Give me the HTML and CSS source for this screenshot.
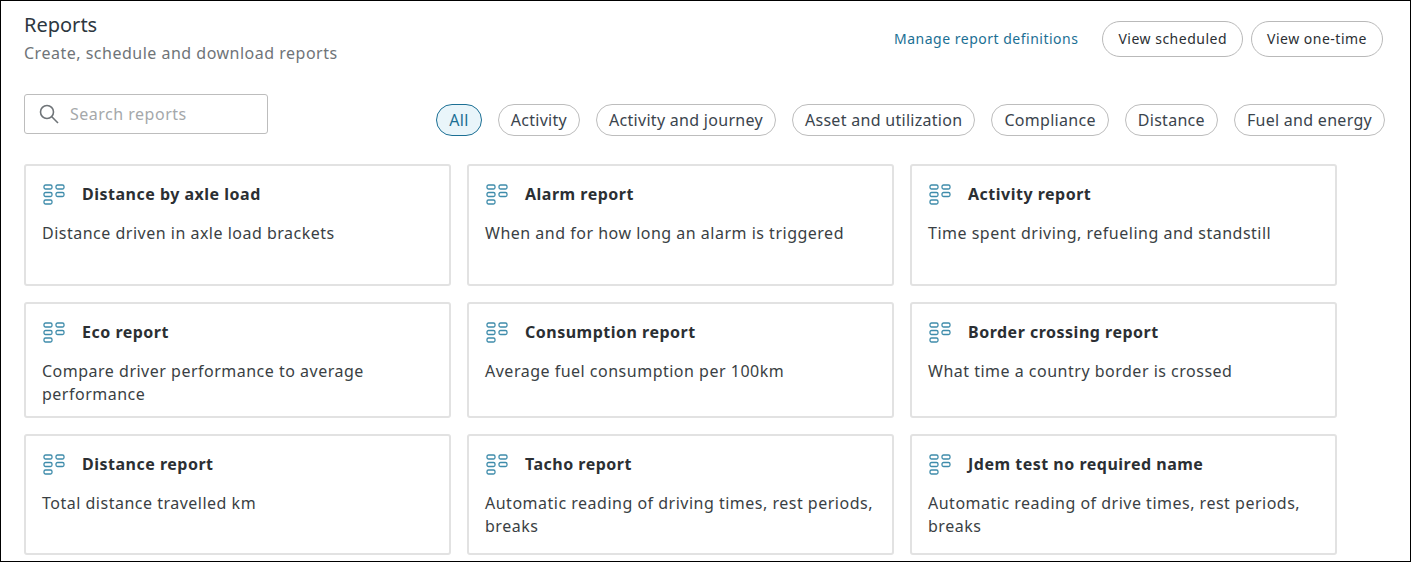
FILE: index.html
```html
<!DOCTYPE html>
<html lang="en">
<head>
    <meta charset="UTF-8">
    <title>Reports</title>
    <link rel="stylesheet" href="styles.css">
</head>
<body>
    <svg class="sprite" width="0" height="0">
        <symbol id="report-icon" viewBox="0 0 22 21">
            <rect x="1" y="1" width="8" height="4" rx="1.5"/>
            <rect x="1" y="8.5" width="8" height="4" rx="1.5"/>
            <rect x="1" y="16" width="8" height="4" rx="1.5"/>
            <rect x="13" y="1" width="8" height="4" rx="1.5"/>
            <rect x="13" y="8.5" width="8" height="4" rx="1.5"/>
        </symbol>
    </svg>
    <div class="page">
        <div class="header">
            <div>
                <h1>Reports</h1>
                <p class="subtitle">Create, schedule and download reports</p>
            </div>
            <div class="actions">
                <a class="manage" href="#">Manage report definitions</a>
                <button class="btn">View scheduled</button>
                <button class="btn">View one-time</button>
            </div>
        </div>
        <div class="filters">
            <div class="search">
                <svg class="search-icon" viewBox="0 0 20 20" width="20" height="20">
                    <circle cx="8" cy="8" r="6.5"/>
                    <path d="M12.8 12.8 L19 19"/>
                </svg>
                <span>Search reports</span>
            </div>
            <div class="chips">
                <span class="chip active">All</span>
                <span class="chip">Activity</span>
                <span class="chip">Activity and journey</span>
                <span class="chip">Asset and utilization</span>
                <span class="chip">Compliance</span>
                <span class="chip">Distance</span>
                <span class="chip">Fuel and energy</span>
            </div>
        </div>
        <div class="cards">
            <div class="card">
                <div class="card-title"><svg class="icon"><use href="#report-icon"/></svg>Distance by axle load</div>
                <p>Distance driven in axle load brackets</p>
            </div>
            <div class="card">
                <div class="card-title"><svg class="icon"><use href="#report-icon"/></svg>Alarm report</div>
                <p>When and for how long an alarm is triggered</p>
            </div>
            <div class="card">
                <div class="card-title"><svg class="icon"><use href="#report-icon"/></svg>Activity report</div>
                <p>Time spent driving, refueling and standstill</p>
            </div>
            <div class="card">
                <div class="card-title"><svg class="icon"><use href="#report-icon"/></svg>Eco report</div>
                <p>Compare driver performance to average performance</p>
            </div>
            <div class="card">
                <div class="card-title"><svg class="icon"><use href="#report-icon"/></svg>Consumption report</div>
                <p>Average fuel consumption per 100km</p>
            </div>
            <div class="card">
                <div class="card-title"><svg class="icon"><use href="#report-icon"/></svg>Border crossing report</div>
                <p>What time a country border is crossed</p>
            </div>
            <div class="card">
                <div class="card-title"><svg class="icon"><use href="#report-icon"/></svg>Distance report</div>
                <p>Total distance travelled km</p>
            </div>
            <div class="card">
                <div class="card-title"><svg class="icon"><use href="#report-icon"/></svg>Tacho report</div>
                <p>Automatic reading of driving times, rest periods, breaks</p>
            </div>
            <div class="card">
                <div class="card-title"><svg class="icon"><use href="#report-icon"/></svg>Jdem test no required name</div>
                <p>Automatic reading of drive times, rest periods, breaks</p>
            </div>
        </div>
    </div>
</body>
</html>
```
FILE: styles.css
```css
html, body {
    margin: 0;
    height: 100%;
    overflow: hidden;
}
body {
    background: #fff;
    color: #2b2f33;
    font-family: "Noto Sans", sans-serif;
    font-size: 16px;
    letter-spacing: 0.5px;
}
.sprite {
    display: block;
    height: 0;
}
.page {
    box-sizing: border-box;
    height: 562px;
    border: 1px solid #000;
    padding: 10px 25px 0 23px;
    overflow: hidden;
}
.header {
    display: flex;
    justify-content: space-between;
    align-items: flex-start;
}
h1 {
    margin: 0;
    font-size: 20px;
    line-height: 28px;
    font-weight: 400;
    color: #2d3740;
    letter-spacing: 0;
}
.subtitle {
    margin: 3px 0 0;
    font-size: 16px;
    line-height: 22px;
    color: #6f7478;
}
.actions {
    display: flex;
    align-items: center;
    gap: 8px;
    margin-top: 10px;
    margin-right: 2px;
}
.manage {
    color: #1b6f94;
    text-decoration: none;
    font-size: 14px;
    margin: 0 16px 2px 0;
}
.btn {
    height: 36px;
    padding: 0 15px 2px;
    border: 1px solid #b9b9b9;
    border-radius: 18px;
    background: #fff;
    color: #2b2f33;
    font-family: inherit;
    font-size: 14px;
    letter-spacing: 0.5px;
}
.filters {
    display: flex;
    justify-content: space-between;
    align-items: flex-start;
    margin-top: 30px;
}
.search {
    box-sizing: border-box;
    display: flex;
    align-items: center;
    gap: 11px;
    width: 244px;
    height: 40px;
    padding-left: 14px;
    border: 1px solid #bdbdbd;
    border-radius: 3px;
    color: #a5a8aa;
}
.search-icon {
    fill: none;
    stroke: #6f7478;
    stroke-width: 1.6;
}
.chips {
    display: flex;
    gap: 16px;
    margin-top: 10px;
    letter-spacing: 0.29px;
}
.chip {
    box-sizing: border-box;
    height: 32px;
    line-height: 30px;
    padding: 0 12px;
    border: 1px solid #bdbdbd;
    border-radius: 16px;
    color: #3a444d;
}
.chip.active {
    color: #1b6f94;
    background: #e9f5fa;
    border-color: #1b6f94;
}
.cards {
    display: grid;
    grid-template-columns: repeat(3, 427px);
    grid-template-rows: 122px 116px 121px;
    gap: 16px;
    margin-top: 28px;
}
.card {
    box-sizing: border-box;
    padding: 16px 16px 0;
    border: 2px solid #e2e2e2;
    border-radius: 3px;
}
.card-title {
    display: flex;
    align-items: center;
    gap: 17px;
    height: 24px;
    font-weight: 700;
    color: #2b2f33;
}
.card p {
    margin: 16px 0 0;
    line-height: 23px;
    color: #3a3f44;
}
.icon {
    width: 22px;
    height: 21px;
    margin-left: 1px;
    fill: none;
    stroke: #3f8cab;
    stroke-width: 1.3;
}
```
